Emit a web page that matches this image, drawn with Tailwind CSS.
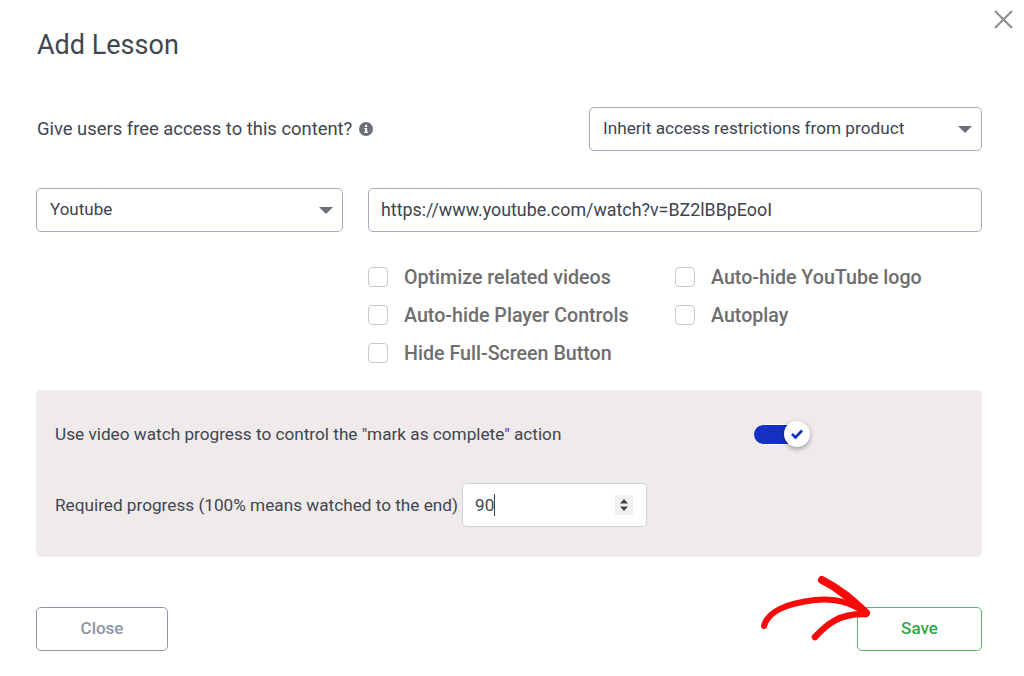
<!DOCTYPE html>
<html>
<head>
<meta charset="utf-8">
<title>Add Lesson</title>
<script src="https://cdn.jsdelivr.net/npm/@tailwindcss/browser@4"></script>
</head>
<body class="bg-white">
<div class="relative w-[1024px] h-[676px] overflow-hidden pl-[36px] pr-[42px] font-['Roboto',sans-serif] text-[#3c4450]">
    <!-- close icon -->
    <button class="absolute top-[10px] right-[11px] text-[#909090]" aria-label="Close form">
        <svg width="19" height="19" viewBox="0 0 19 19" fill="none" stroke="currentColor" stroke-width="2.2"><path d="M1 1 18 18M18 1 1 18"/></svg>
    </button>

    <h2 class="pt-[29px] pl-[1px] h-[107px] text-[27px] leading-[32px] text-[#3f4650]">Add Lesson</h2>

    <div class="flex justify-between items-center h-[44px]">
        <div class="flex items-center gap-[7px] pl-[1px] text-[18.400px] text-[#3f4650]">
            Give users free access to this content?
            <svg width="14" height="14" viewBox="0 0 14 14"><circle cx="7" cy="7" r="7" fill="#6b7078"/><rect x="6" y="6" width="2.2" height="4.8" fill="#fff"/><rect x="5.2" y="9.9" width="3.8" height="1.1" fill="#fff"/><rect x="5.2" y="6" width="2.5" height="1" fill="#fff"/><circle cx="7.1" cy="3.9" r="1.2" fill="#fff"/></svg>
        </div>
        <div class="flex items-center justify-between w-[393px] h-[44px] pl-[13px] pr-[9px] border border-[#a3adbb] rounded-[5px] text-[17.200px]">
            Inherit access restrictions from product
            <svg width="14" height="7" viewBox="0 0 14 7"><path d="M0 0h14L7 7z" fill="#6b7078"/></svg>
        </div>
    </div>

    <div class="flex gap-[25px] mt-[37px] h-[44px]">
        <div class="flex items-center justify-between w-[307px] pl-[13px] pr-[9px] border border-[#a3adbb] rounded-[5px] text-[17px]">
            Youtube
            <svg width="14" height="7" viewBox="0 0 14 7"><path d="M0 0h14L7 7z" fill="#6b7078"/></svg>
        </div>
        <input type="text" value="https://www.youtube.com/watch?v=BZ2lBBpEooI" class="flex-1 pl-[12px] pr-[13px] border border-[#a3adbb] rounded-[5px] text-[17.850px] text-[#3c4450]">
    </div>

    <div class="ml-[332px] mt-[26px] h-[132px] grid grid-cols-[307px_1fr] auto-rows-[38px] text-[19.650px] font-medium text-[#6e6e6e]">
        <label class="flex items-center gap-[16px]"><span class="w-[20px] h-[20px] border border-[#c9c9c9] rounded-[4px]"></span><span class="pt-[2px]">Optimize related videos</span></label>
        <label class="flex items-center gap-[16px]"><span class="w-[20px] h-[20px] border border-[#c9c9c9] rounded-[4px]"></span><span class="pt-[2px]">Auto-hide YouTube logo</span></label>
        <label class="flex items-center gap-[16px]"><span class="w-[20px] h-[20px] border border-[#c9c9c9] rounded-[4px]"></span><span class="pt-[2px]">Auto-hide Player Controls</span></label>
        <label class="flex items-center gap-[16px]"><span class="w-[20px] h-[20px] border border-[#c9c9c9] rounded-[4px]"></span><span class="pt-[2px]">Autoplay</span></label>
        <label class="flex items-center gap-[16px]"><span class="w-[20px] h-[20px] border border-[#c9c9c9] rounded-[4px]"></span><span class="pt-[2px]">Hide Full-Screen Button</span></label>
    </div>

    <div class="h-[167px] bg-[#efebea] rounded-[5px] pl-[19px] text-[17.200px] text-[#3f4650]">
        <div class="flex items-center h-[88px]">
            <span class="w-[698px] pt-[2px]">Use video watch progress to control the "mark as complete" action</span>
            <div class="relative w-[56px] h-[21px] bg-[#1431c4] border border-white rounded-full">
                <span class="absolute right-[-2px] top-[-4px] flex items-center justify-center w-[26px] h-[26px] bg-white rounded-full shadow-[0_2px_5px_rgba(0,0,0,0.35)]">
                    <svg width="12" height="10" viewBox="0 0 12 10" fill="none" stroke="#1431c4" stroke-width="2.6"><path d="M1 5l3.5 3.5L11 1.5"/></svg>
                </span>
            </div>
        </div>
        <div class="flex items-center gap-[4px] h-[44px] mt-[5px]">
            <span class="pt-[2px]">Required progress (100% means watched to the end)</span>
            <div class="flex items-center justify-between w-[185px] h-[44px] pl-[12px] pr-[13px] bg-white border border-[#ced3da] rounded-[5px] text-[17.200px]">
                <span class="border-r border-[#3c4450] leading-[22px]">90</span>
                <span class="flex items-center justify-center w-[18px] h-[20px] bg-[#f1f1f1]">
                    <svg width="10" height="14" viewBox="0 0 10 14" fill="#444"><path d="M5 1l4 4.5H1zM5 13 1 8.500h8z"/></svg>
                </span>
            </div>
        </div>
    </div>

    <div class="flex justify-between mt-[50px]">
        <button class="w-[132px] h-[44px] border border-[#8f95a6] rounded-[5px] text-[17px] font-medium text-[#8f95a6]">Close</button>
        <button class="w-[125px] h-[44px] border border-[#5cb56a] rounded-[5px] text-[17px] font-medium text-[#2fa84a]">Save</button>
    </div>

    <!-- red annotation arrow -->
    <svg class="absolute left-0 top-0 pointer-events-none" width="1024" height="676" fill="none" stroke="#f80a0a" stroke-linecap="round" stroke-linejoin="round">
        <path d="M764 626C768 610 790 603 815 600C835 598 850 602 866 613" stroke-width="6"/>
        <path d="M822 580C840 589 852 600 866 613" stroke-width="8"/>
        <path d="M815 637C827 624 840 613 866 614" stroke-width="6.500"/>
    </svg>
</div>
</body>
</html>
